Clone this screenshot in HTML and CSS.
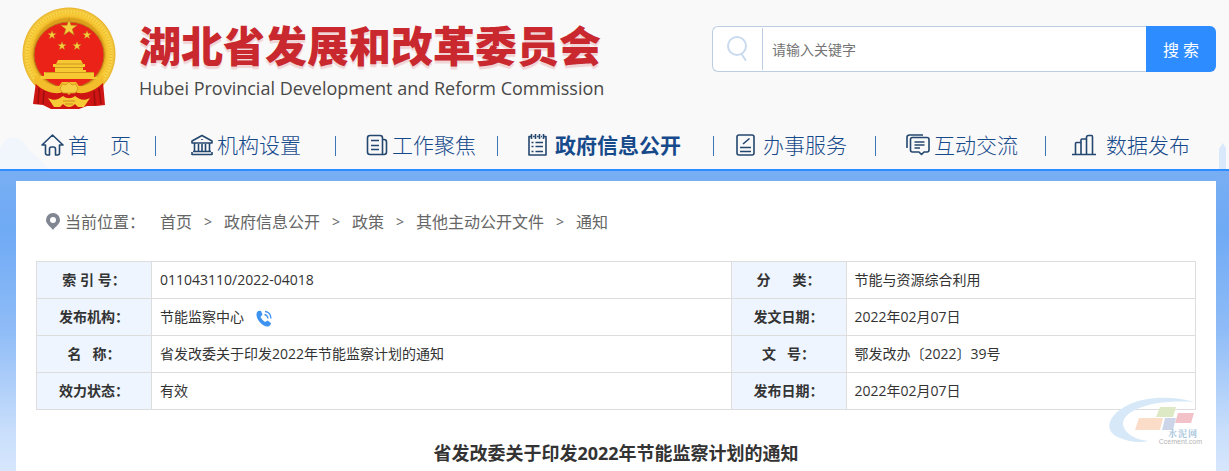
FILE: index.html
```html
<!DOCTYPE html>
<html lang="zh-CN">
<head>
<meta charset="utf-8">
<meta name="viewport" content="width=device-width, initial-scale=1">
<title>省发改委关于印发2022年节能监察计划的通知 - 湖北省发展和改革委员会</title>
<link rel="stylesheet" href="styles.css">
</head>
<body>

<header class="header">
	<svg class="deco-left" viewBox="0 0 60 50"><path d="M0 24C5 14 12 8 18 12C26 8 32 22 38 28C46 32 52 42 60 50H0Z" fill="#f0f6fc"/></svg>
	<svg class="deco-right" viewBox="0 0 8 26"><path d="M0 26V6L4 0L7 5V26Z" fill="#d9e9fb"/></svg>
	<div class="top">
		<a class="logo" href="#">
			<svg class="emblem" viewBox="0 0 96 104" aria-hidden="true">
				<defs>
					<radialGradient id="gold" cx="50%" cy="50%" r="50%">
						<stop offset="76%" stop-color="#dc9f1c"/>
						<stop offset="82%" stop-color="#f5c42c"/>
						<stop offset="92%" stop-color="#fad84c"/>
						<stop offset="100%" stop-color="#e8b22a"/>
					</radialGradient>
					<path id="star" d="M0 -10L2.3 -3.2H9.5L3.7 1.2L5.9 8.1L0 3.9L-5.9 8.1L-3.7 1.2L-9.5 -3.2H-2.3Z"/>
				</defs>
				<circle cx="48" cy="48" r="46.5" fill="url(#gold)"/>
				<circle cx="48" cy="48" r="42" fill="none" stroke="#edb92e" stroke-width="3" stroke-dasharray="1 2"/>
				<circle cx="48" cy="48" r="38" fill="none" stroke="#f2c234" stroke-width="2" stroke-dasharray="3 2"/>
				<ellipse cx="48" cy="49" rx="35" ry="33" fill="#ea2218" stroke="#b8741a"/>
				<g fill="#f6cf3e" stroke="#ad7413" stroke-width=".6">
					<use href="#star" transform="translate(48 22) scale(.88)"/>
					<use href="#star" transform="translate(31 29) scale(.46)"/>
					<use href="#star" transform="translate(66 29) scale(.46)"/>
					<use href="#star" transform="translate(41 40) scale(.46)"/>
					<use href="#star" transform="translate(56 40) scale(.46)"/>
				</g>
				<path d="M37 54H60L62 58H64V61H62V64H65V66H73V71H76V73H19V70H23V66H34V61H32V58H35Z" fill="#f6c832"/>
				<path d="M35 58H62M34 61.500H62M24 66.500H73" stroke="#c98a18" stroke-width=".8"/>
				<path d="M15 76L28 80L38 86L58 86L69 80L82 76L84 99L75 100L66 100L58 103L30 103L22 99L12 98Z" fill="#cf1414"/>
				<path d="M18 82L17 98M23 85L22 98M78 82L80 98M73 85L74 99" stroke="#9c0d0d" stroke-width="1.500"/>
				<path d="M14 69C23 76 32 81 38 80L41 76H55L58 80C65 81 74 76 82 69L83 76C75 84 66 88 57 87L52 85L48 89L44 85L39 87C30 88 20 84 13 76Z" fill="#f3bd2b"/>
				<path d="M39 83L41 78L45 79L48 76L51 79L55 78L57 83L54 87H42Z" fill="#f7cf45" stroke="#d09522" stroke-width=".8"/>
				<path d="M27 92C33 95 37 94 42 90C46 93 50 93 54 90C59 94 63 95 69 92L63 101H57L54 98C50 102 46 102 42 98L39 101H33Z" fill="#f6cb36"/>
				<path d="M42 95H54M44 98H52" stroke="#c98b1a"/>
			</svg>
			<span class="logo-text">
				<span class="logo-cn">湖北省发展和改革委员会</span>
				<span class="logo-en">Hubei Provincial Development and Reform Commission</span>
			</span>
		</a>
		<form class="search">
			<label class="search-icon" for="kw">
				<svg viewBox="0 0 22 26" aria-label="搜索"><circle cx="10" cy="10" r="9" /><path d="M14.500 18L18.500 24"/></svg>
			</label>
			<input type="text" id="kw" placeholder="请输入关键字">
			<button type="submit">搜 索</button>
		</form>
	</div>
	<nav>
		<ul class="nav">
			<li><a href="#"><svg width="23" height="22" viewBox="0 0 23 22"><path d="M1 11L11.500 1L22 11H18.500V19Q18.500 21 16.500 21H14.500V15Q14.500 13 12.500 13H10.500Q8.500 13 8.500 15V21H6.500Q4.500 21 4.500 19V11Z"/></svg><span>首　页</span></a></li>
			<li><a href="#"><svg width="22" height="22" viewBox="0 0 22 22"><path d="M1 7L11 1.500L21 7V9H1ZM3.500 9V17.500M18.500 9V17.500M7.500 10V17M11 10V17M14.500 10V17M2 17.500H20M1 20.500H21M1 18V21M21 18V21M11 5V6"/></svg><span>机构设置</span></a></li>
			<li><a href="#"><svg width="22" height="22" viewBox="0 0 22 22"><path d="M4 1.500H14Q16.500 1.500 16.500 4V20.500H4Q1.500 20.500 1.500 18V4Q1.500 1.500 4 1.500ZM16.500 5.500H18Q20.500 5.500 20.500 8V18Q20.500 20.500 18 20.500H15M5 6.500H13M5 11.500H13M5 15.500H13"/></svg><span>工作聚焦</span></a></li>
			<li class="on"><a href="#"><svg width="19" height="22" viewBox="0 0 19 22"><path d="M3 2.500H1V21H18V2.500H16M5 2.500H6.500M9 2.500H10.500M13 2.500H14M3.500 0V5M7.500 0V5M11.500 0V5M15.500 0V5M7.500 8.500H15M7.500 12.500H15M7.500 17.500H15M3.500 8.500H5.500M3.500 12.500H5.500M3.500 17.500H5.500"/></svg><span>政府信息公开</span></a></li>
			<li><a href="#"><svg width="19" height="22" viewBox="0 0 19 22"><path d="M3 1H16Q18 1 18 3V19Q18 21 16 21H3Q1 21 1 19V3Q1 1 3 1ZM7 10L13.500 4.500M4 13.500H15M4 17.500H15"/></svg><span>办事服务</span></a></li>
			<li><a href="#"><svg width="24" height="22" viewBox="0 0 24 22"><path d="M1 14V3.500Q1 1 3.500 1H17M6.500 3.500H21Q23 3.500 23 5.500V16Q23 18 21 18H18L15.500 20.500L13 18H6.500Q4.500 18 4.500 16V5.500Q4.500 3.500 6.500 3.500ZM8.500 8H18.500M8.500 11H18.500M8.500 14H14"/></svg><span>互动交流</span></a></li>
			<li><a href="#"><svg width="24" height="22" viewBox="0 0 24 22"><path d="M0 20.500H24M3.500 20V9.500Q3.500 8.500 4.500 8.500H9V20M9 9V6Q9 5 10 5H14.500V20M14.500 6V3.500Q14.500 1.500 16.500 1.500H19.500Q20.500 1.500 20.500 3V20"/></svg><span>数据发布</span></a></li>
		</ul>
	</nav>
</header>

<main class="content">
	<div class="position">
		<svg width="14" height="17" viewBox="0 0 14 17" aria-hidden="true"><path d="M7 0A7 7 0 0 1 14 7C14 11 10 13 7 17C4 13 0 11 0 7A7 7 0 0 1 7 0ZM7 4A3 3 0 1 0 7 10A3 3 0 1 0 7 4Z" fill="#818693" fill-rule="evenodd"/></svg>
		<span class="here">当前位置：</span>
		<a href="#">首页</a><i>&gt;</i><a href="#">政府信息公开</a><i>&gt;</i><a href="#">政策</a><i>&gt;</i><a href="#">其他主动公开文件</a><i>&gt;</i><a href="#">通知</a>
	</div>

	<table class="info">
		<colgroup><col class="c-name"><col class="c-left"><col class="c-name"><col></colgroup>
		<tr>
			<th scope="row">索 引 号：</th>
			<td>011043110/2022-04018</td>
			<th scope="row">分&nbsp; &nbsp; &nbsp;&nbsp;类：</th>
			<td>节能与资源综合利用</td>
		</tr>
		<tr>
			<th scope="row">发布机构：</th>
			<td>节能监察中心<a class="tel" href="#" aria-label="联系电话"><svg width="16" height="17" viewBox="0 0 16 17"><path d="M1 2Q3 0 5 1L6.500 4.500L4.500 7Q6 10 9 12L11.500 10.500L15 13Q15 15.500 12.500 16.500C6 17 0 9 .500 4Z" fill="#3f93f0"/><path d="M8.500 4.500Q11.500 5 12 8.500M9 1.500Q14.500 2 15 8.500" fill="none" stroke="#3f93f0" stroke-width="1.300"/></svg></a></td>
			<th scope="row">发文日期：</th>
			<td>2022年02月07日</td>
		</tr>
		<tr>
			<th scope="row">名&nbsp; &nbsp;称：</th>
			<td>省发改委关于印发2022年节能监察计划的通知</td>
			<th scope="row">文&nbsp; &nbsp;号：</th>
			<td>鄂发改办〔2022〕39号</td>
		</tr>
		<tr>
			<th scope="row">效力状态：</th>
			<td>有效</td>
			<th scope="row">发布日期：</th>
			<td>2022年02月07日</td>
		</tr>
	</table>

	<h1>省发改委关于印发2022年节能监察计划的通知</h1>

	<div class="mark">
		<svg viewBox="0 0 96 50" aria-hidden="true">
			<path d="M87 5C65 -1 38 -1 20 8C0 18 -6 34 12 41C21 45 32 46 41 44C27 43 16 36 15 27C15 14 42 2 87 5Z" fill="#d7e9f8"/>
			<path d="M52 10H68L65 20H48Z" fill="#dce9c4"/>
			<path d="M70 16H86L83 26H67Z" fill="#f2c2c8"/>
			<path d="M31 21H55L52 33H27Z" fill="#fbdcc8"/>
			<path d="M57 21H68L65 33H54Z" fill="#cdd6e9"/>
		</svg>
		<b>水泥网</b>
		<small>Ccement.com</small>
	</div>
</main>

</body>
</html>
```

FILE: styles.css
```css
* {
	box-sizing: border-box;
}
body {
	margin: 0;
	min-height: 100vh;
	display: flex;
	flex-direction: column;
	font-family: "Open Sans", "Noto Sans CJK SC", sans-serif;
	font-size: 14px;
	color: #333;
	background: linear-gradient(#78aef3 171px, #6faaf5 230px, #8fbcf7 330px, #c8defb 430px, #d6e6fd 100%);
}
a {
	color: inherit;
	text-decoration: none;
}
ul {
	margin: 0;
	padding: 0;
	list-style: none;
}

/* header */
.header {
	position: relative;
	background: #f9f9f9;
	border-bottom: 2px solid #2d8cff;
}
.deco-left {
	position: absolute;
	left: 0;
	bottom: 0;
	width: 48px;
	height: 40px;
}
.deco-right {
	position: absolute;
	right: 2px;
	bottom: 0;
	width: 8px;
	height: 26px;
}
.top {
	position: relative;
	display: flex;
	justify-content: space-between;
	align-items: flex-start;
	height: 120px;
	padding: 6px 13px 0 21px;
}
.logo {
	display: flex;
}
.emblem {
	width: 96px;
	height: 104px;
}
.logo-text {
	padding: 12px 0 0 22px;
}
.logo-cn,
.logo-en {
	display: block;
	white-space: nowrap;
}
.logo-cn {
	font-family: "Noto Sans CJK SC", sans-serif;
	font-size: 42px;
	font-weight: 900;
	line-height: 52px;
	color: #c8282e;
	text-shadow: 0 3px 1px #f0d4d6;
}
.logo-en {
	font-size: 18px;
	line-height: 36px;
	color: #484848;
}

.search {
	display: flex;
	width: 504px;
	max-width: 45%;
	height: 46px;
	margin-top: 20px;
}
.search-icon {
	display: flex;
	align-items: center;
	justify-content: center;
	width: 50px;
	background: #fff;
	border: 1px solid #bccde2;
	border-right: 0;
	border-radius: 6px 0 0 6px;
}
.search-icon svg {
	width: 22px;
	height: 26px;
	fill: none;
	stroke: #c9daef;
	stroke-width: 2;
	stroke-linecap: round;
}
.search input {
	flex: 1;
	min-width: 0;
	padding: 0 10px;
	border: 1px solid #bccde2;
	border-width: 1px 0;
	background: linear-gradient(#bccde2, #bccde2) no-repeat 0 1px / 1px 42px #fff;
	font: inherit;
	outline: 0;
}
.search input::placeholder {
	color: #757575;
}
.search button {
	width: 70px;
	padding: 0;
	border: 0;
	border-radius: 0 6px 6px 0;
	background: #2d8cff;
	color: #fff;
	font: inherit;
	font-size: 16px;
}

/* nav */
.nav {
	position: relative;
	display: grid;
	grid-template-columns: 156fr 180fr 162fr 216fr 162fr 170fr 183fr;
	height: 49px;
}
.nav li {
	height: 20px;
	margin-top: 16px;
	padding-left: 30px;
	border-right: 1px solid #3d76b5;
}
.nav li:nth-child(1) {
	padding-left: 41px;
}
.nav li:nth-child(2) {
	padding-left: 35px;
}
.nav li:nth-child(5) {
	padding-left: 22px;
}
.nav li:nth-child(7) {
	padding-left: 26px;
	border-right: 0;
}
.nav a {
	display: flex;
	align-items: center;
	gap: 4px;
	height: 16px;
	font-size: 21px;
	font-weight: 300;
	white-space: nowrap;
	color: #174a8b;
}
.nav li:nth-child(7) a {
	gap: 10px;
}
.nav svg {
	flex: none;
	position: relative;
	top: 1px;
	fill: none;
	stroke: #24476f;
	stroke-width: 1.6;
	stroke-linejoin: round;
}
.nav .on a {
	font-weight: bold;
}
.nav .on a,
.nav li:nth-child(5) a {
	gap: 8px;
}

/* content */
.content {
	position: relative;
	flex: 1;
	margin: 10px 13px 0 16px;
	padding: 24px 20px 0;
	background: #fff;
}
.position {
	display: flex;
	align-items: center;
	height: 32px;
	margin-bottom: 24px;
	padding-left: 10px;
	font-size: 16px;
	color: #666;
	white-space: nowrap;
}
.position .here {
	margin: 0 15px 0 5px;
}
.position i {
	width: 32px;
	font-size: 14px;
	font-style: normal;
	text-align: center;
}

.info {
	width: 100%;
	table-layout: fixed;
	border-collapse: collapse;
}
.info .c-name {
	width: 115px;
}
.info .c-left {
	width: 50%;
}
.info th,
.info td {
	height: 37px;
	padding: 0 8px;
	border: 1px solid #ddd;
	line-height: 20px;
	text-align: left;
}
.info th {
	padding: 0;
	background: #eef5ff;
	text-align: center;
}
.tel {
	margin-left: 12px;
}
.tel svg {
	vertical-align: middle;
}

h1 {
	margin: 28px 0 0;
	font-size: 18px;
	line-height: 30px;
	text-align: center;
}

/* watermark in the corner of the article */
.mark {
	position: absolute;
	top: 216px;
	right: 14px;
	width: 94px;
	height: 50px;
}
.mark svg {
	display: block;
	width: 96px;
	height: 50px;
}
.mark b,
.mark small {
	position: absolute;
	right: 0;
	white-space: nowrap;
	line-height: 10px;
}
.mark b {
	right: 4px;
	bottom: 8px;
	font-family: "Noto Serif CJK SC", "Noto Sans CJK SC", serif;
	font-size: 9px;
	letter-spacing: 1px;
	color: #a9c6dc;
}
.mark small {
	bottom: 0;
	font-family: "Liberation Sans", sans-serif;
	font-size: 7px;
	color: #b5b5b5;
}
```
